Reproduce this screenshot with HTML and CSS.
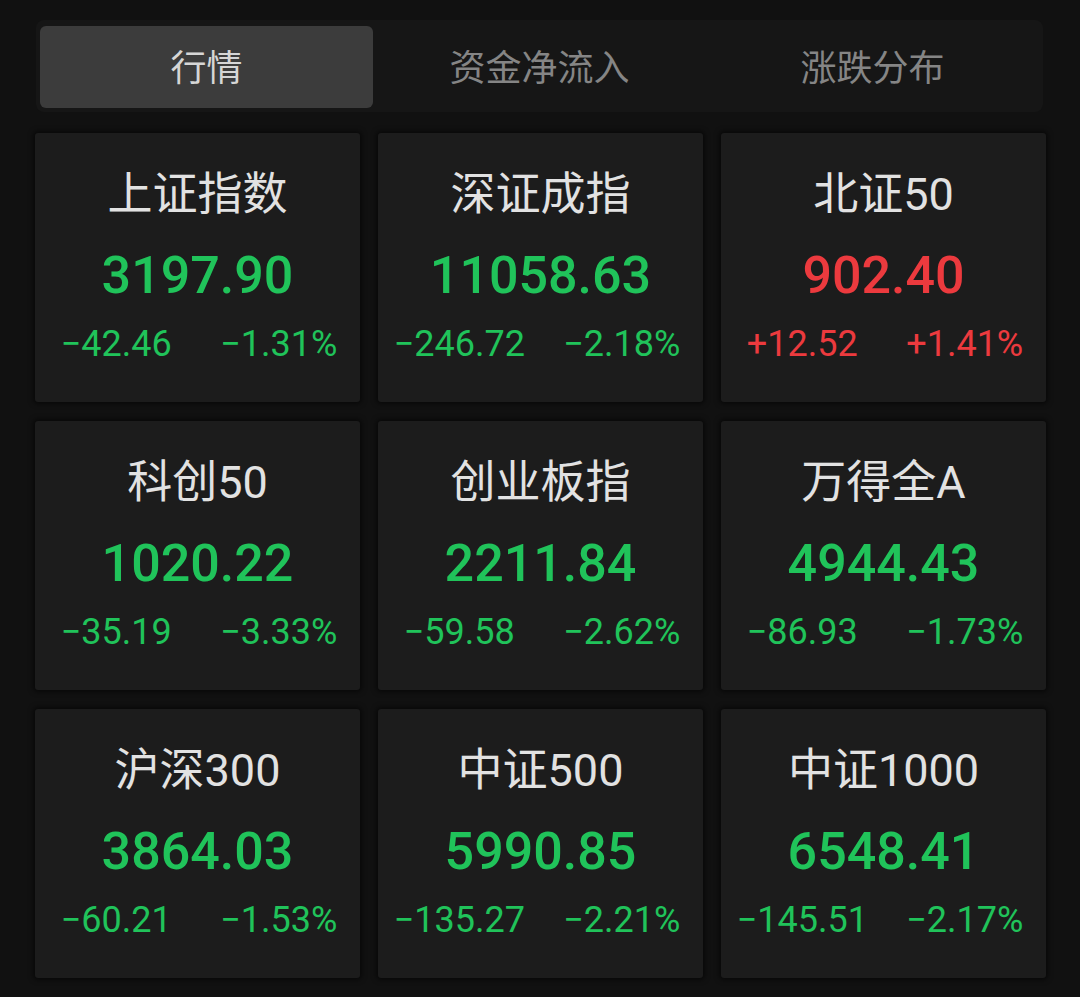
FILE: index.html
```html
<!DOCTYPE html>
<html lang="zh-CN">
<head>
<meta charset="utf-8">
<link rel="stylesheet" href="styles.css">
</head>
<body>
<div class="page">
  <div class="tabs">
    <div class="tab active">行情</div>
    <div class="tab">资金净流入</div>
    <div class="tab">涨跌分布</div>
  </div>
  <div class="grid">
    <div class="card"><div class="name">上证指数</div><div class="price down">3197.90</div><div class="chg down"><span>−42.46</span><span>−1.31%</span></div></div>
    <div class="card"><div class="name">深证成指</div><div class="price down">11058.63</div><div class="chg down"><span>−246.72</span><span>−2.18%</span></div></div>
    <div class="card"><div class="name">北证50</div><div class="price up">902.40</div><div class="chg up"><span>+12.52</span><span>+1.41%</span></div></div>
    <div class="card"><div class="name">科创50</div><div class="price down">1020.22</div><div class="chg down"><span>−35.19</span><span>−3.33%</span></div></div>
    <div class="card"><div class="name">创业板指</div><div class="price down">2211.84</div><div class="chg down"><span>−59.58</span><span>−2.62%</span></div></div>
    <div class="card"><div class="name">万得全A</div><div class="price down">4944.43</div><div class="chg down"><span>−86.93</span><span>−1.73%</span></div></div>
    <div class="card"><div class="name">沪深300</div><div class="price down">3864.03</div><div class="chg down"><span>−60.21</span><span>−1.53%</span></div></div>
    <div class="card"><div class="name">中证500</div><div class="price down">5990.85</div><div class="chg down"><span>−135.27</span><span>−2.21%</span></div></div>
    <div class="card"><div class="name">中证1000</div><div class="price down">6548.41</div><div class="chg down"><span>−145.51</span><span>−2.17%</span></div></div>
  </div>
</div>
</body>
</html>
```
FILE: styles.css
```css
html, body {
  margin: 0;
  padding: 0;
  background: #111111;
}
body {
  width: 1080px;
  height: 997px;
  overflow: hidden;
  font-family: Roboto, "Noto Sans CJK SC", sans-serif;
}
.page {
  padding: 20px 34px 0 35px;
}
.tabs {
  margin-left: 1px;
  width: 1007px;
  height: 92px;
  box-sizing: border-box;
  padding: 6px 4px 4px 4px;
  background: #161616;
  border-radius: 8px;
  display: grid;
  grid-template-columns: repeat(3, 1fr);
}
.tab {
  display: flex;
  align-items: center;
  justify-content: center;
  font-family: "Noto Sans CJK SC", sans-serif;
  font-size: 36px;
  color: #858585;
  border-radius: 6px;
  padding-bottom: 5px;
}
.tab.active {
  background: #3c3c3c;
  color: #d6d6d6;
}
.grid {
  margin-top: 21px;
  display: grid;
  grid-template-columns: repeat(3, 325px);
  grid-auto-rows: 269px;
  column-gap: 18px;
  row-gap: 19px;
}
.card {
  background: #1c1c1c;
  border-radius: 3px;
  box-shadow: 0 0 5px 2px rgba(0, 0, 0, 0.55);
  display: flex;
  flex-direction: column;
  align-items: stretch;
  padding-top: 35px;
  box-sizing: border-box;
}
.name {
  text-align: center;
  font-size: 45px;
  line-height: 54px;
  color: #e2e2e2;
  font-family: Roboto, "Noto Sans CJK SC", sans-serif;
}
.price {
  text-align: center;
  font-size: 52px;
  line-height: 60px;
  font-weight: 500;
  margin-top: 24px;
}
.chg {
  display: grid;
  grid-template-columns: 1fr 1fr;
  font-size: 36px;
  line-height: 44px;
  margin-top: 16px;
}
.chg span {
  text-align: center;
}
.down { color: #20c35a; }
.up { color: #ec3a3e; }
```
